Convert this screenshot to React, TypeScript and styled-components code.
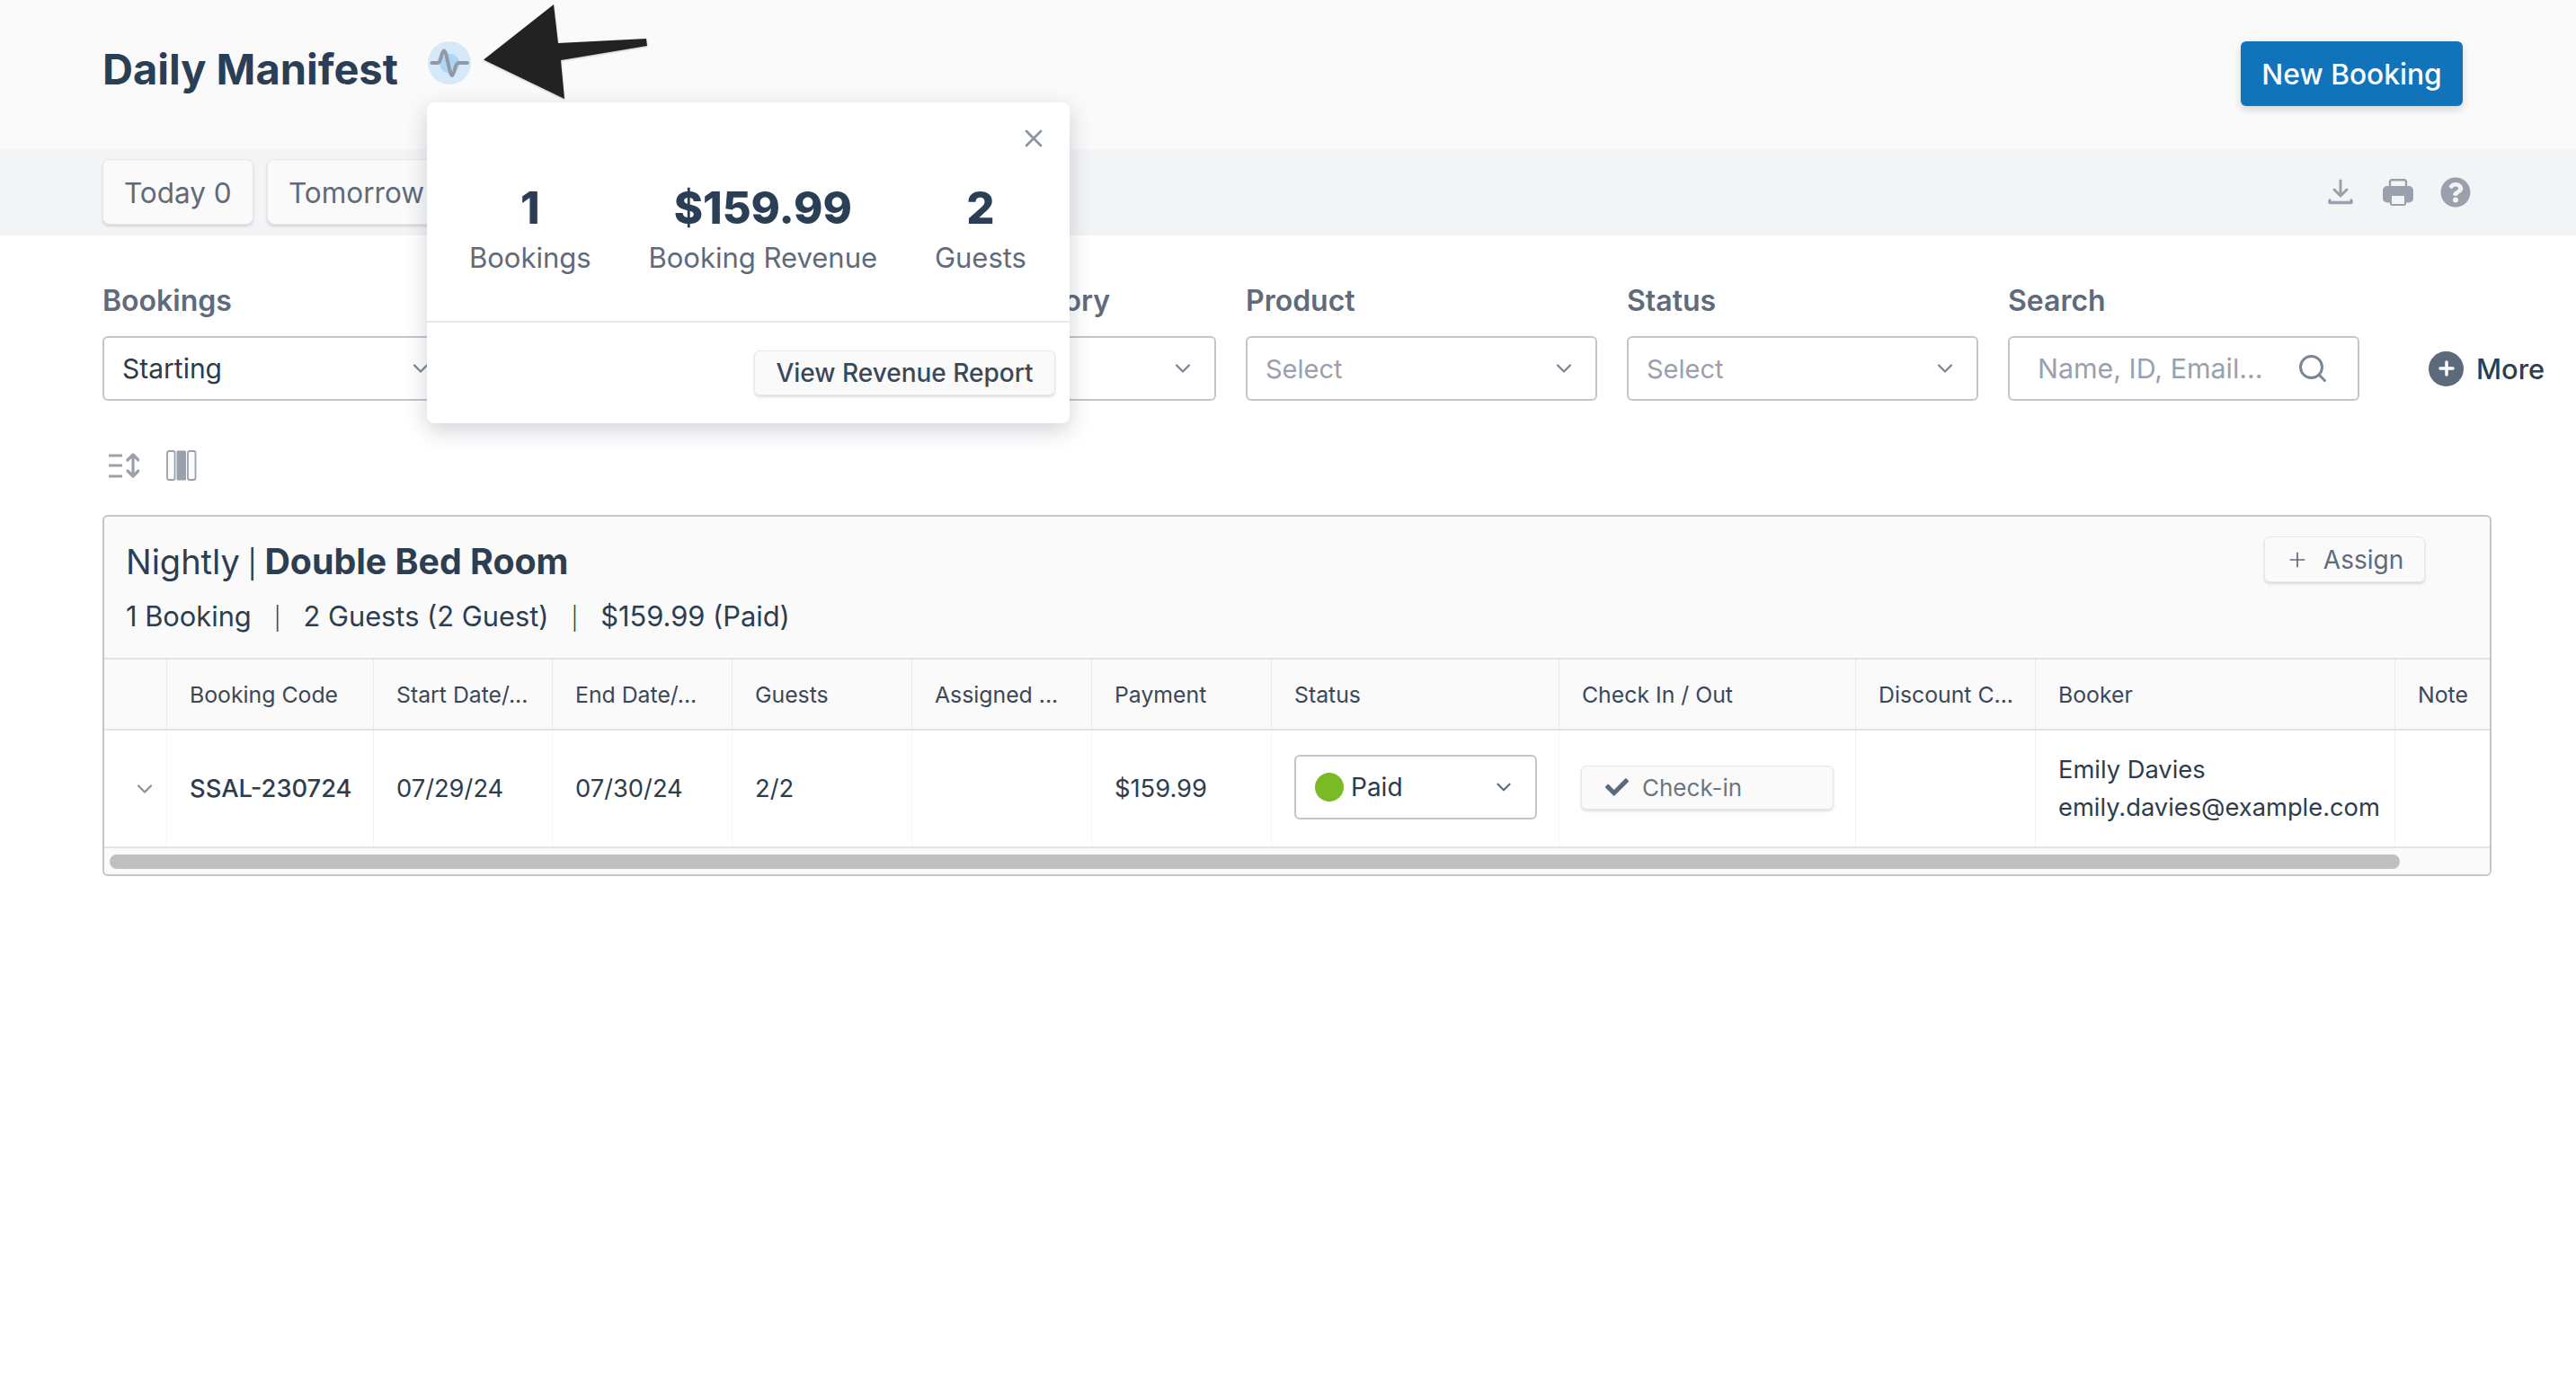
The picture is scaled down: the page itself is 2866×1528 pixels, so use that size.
import React from "react";
import styled, { createGlobalStyle } from "styled-components";
import { ChevronDown, Search, X, Plus } from "lucide-react";
import { FaCheck, FaQuestionCircle } from "react-icons/fa";

const Global = createGlobalStyle`
  html, body { margin: 0; padding: 0; background: #fff; }
  body { font-family: Inter, "Liberation Sans", sans-serif; color: #2c3e50; -webkit-font-smoothing: antialiased; }
  * { box-sizing: border-box; }
`;

const Page = styled.div`
  position: relative;
  width: 2866px;
  height: 1528px;
  overflow: hidden;
`;

const Header = styled.header`
  height: 166px;
  background: #fafafa;
  padding: 46px 126px 0 114px;
  display: flex;
  justify-content: space-between;
  align-items: flex-start;
`;

const TitleRow = styled.div`
  display: flex;
  align-items: center;
  gap: 33px;
`;

const Title = styled.h1`
  margin: 0;
  font-size: 47px;
  line-height: 62px;
  font-weight: 700;
  color: #2a3f55;
`;

const PulseBadge = styled.span`
  width: 48px;
  height: 48px;
  margin-top: -14px;
  display: inline-flex;
`;

const PrimaryButton = styled.button`
  width: 247px;
  height: 72px;
  border: 0;
  border-radius: 6px;
  background: #1174bb;
  color: #fff;
  font: 500 31.7px Inter, sans-serif;
  box-shadow: 0 4px 8px rgba(30, 50, 80, 0.18);
`;

const Toolbar = styled.div`
  height: 96px;
  background: #f3f4f6;
  padding: 11px 117px 0 114px;
  display: flex;
  justify-content: space-between;
`;

const Tabs = styled.div`
  display: flex;
  gap: 15px;
`;

const Tab = styled.button<{ $w: number }>`
  width: ${(p) => p.$w}px;
  height: 73px;
  border: 1px solid #e6e7ea;
  border-radius: 8px;
  background: #fafafa;
  color: #5f6b7a;
  font: 400 31.5px Inter, sans-serif;
  text-align: left;
  padding: 2px 23px 0;
  white-space: nowrap;
  box-shadow: 0 2px 3px rgba(40, 50, 70, 0.16);
`;

const ToolIcons = styled.div`
  display: flex;
  align-items: center;
  gap: 30px;
  height: 73px;
  color: #9aa1ac;
`;

const DownloadSlot = styled.span`
  display: inline-flex;
  margin-right: 3px;
`;

const Filters = styled.div`
  padding: 51px 0 0 114px;
  display: flex;
  gap: 33px;
`;

const Field = styled.div`
  width: 391px;
  flex: none;
`;

const FieldLabel = styled.div`
  height: 44px;
  line-height: 44px;
  font-size: 32px;
  font-weight: 600;
  color: #5f6b7a;
  margin-bottom: 17px;
  white-space: nowrap;
`;

const SelectBox = styled.div<{ $muted?: boolean }>`
  height: 72px;
  border: 2px solid #c4c5c9;
  border-radius: 6px;
  background: #fff;
  display: flex;
  align-items: center;
  justify-content: space-between;
  padding: 0 21px 0 20px;
  font-size: ${(p) => (p.$muted ? 29 : 30)}px;
  color: ${(p) => (p.$muted ? "#9aa1ac" : "#2d3a48")};
  svg { color: #7d8794; flex: none; }
`;

const SearchBox = styled(SelectBox)`
  padding-left: 31px;
  padding-right: 32px;
  font-size: 30.4px;
`;

const MoreLink = styled.div`
  display: flex;
  align-items: center;
  gap: 14px;
  height: 72px;
  margin-top: 61px;
  margin-left: 44px;
  font-size: 30.8px;
  font-weight: 500;
  color: #2c3e50;
`;

const MoreDot = styled.span`
  width: 39px;
  height: 39px;
  border-radius: 50%;
  background: #5c6b7c;
  color: #fff;
  display: inline-flex;
  align-items: center;
  justify-content: center;
`;

const TableTools = styled.div`
  height: 34px;
  margin: 55px 0 38px 121px;
  display: flex;
  align-items: center;
  gap: 30px;
`;

const Card = styled.section`
  margin-left: 114px;
  width: 2658px;
  height: 402px;
  border: 2px solid #c5c6cb;
  border-radius: 6px;
  background: #fafafa;
  overflow: hidden;
`;

const CardHead = styled.div`
  height: 157px;
  padding: 22px 72px 0 24px;
  display: flex;
  justify-content: space-between;
  align-items: flex-start;
`;

const CardTitle = styled.div`
  font-size: 38px;
  line-height: 56px;
  color: #2c3e50;
  b { font-weight: 700; font-size: 39.3px; }
`;

const TitlePipe = styled.span`
  font-size: 31px;
  margin: 0 -2px 0 -2px;
`;

const CardSub = styled.div`
  font-size: 30.8px;
  line-height: 44px;
  margin-top: 8px;
  color: #2c3e50;
  white-space: nowrap;
`;

const Pipe = styled.span`
  font-size: 25px;
  margin: 0 25px;
  font-weight: 300;
`;

const GhostButton = styled.button`
  width: 179px;
  height: 51px;
  border: 1px solid #e6e7ea;
  border-radius: 6px;
  background: #fafafa;
  color: #5f6b7a;
  font: 400 28px Inter, sans-serif;
  display: flex;
  align-items: center;
  justify-content: center;
  gap: 16px;
  box-shadow: 0 2px 3px rgba(40, 50, 70, 0.16);
`;

const GRID = "69px 230px 199px 200px 200px 200px 200px 320px 330px 200px 400px 1fr";

const HeadRow = styled.div`
  display: grid;
  grid-template-columns: ${GRID};
  height: 81px;
  border-top: 2px solid #e3e4e7;
  border-bottom: 2px solid #e3e4e7;
  background: #fafafa;
`;

const HeadCell = styled.div<{ $first?: boolean }>`
  border-left: ${(p) => (p.$first ? "0" : "1px solid #e8e9ec")};
  padding-left: 25px;
  font-size: 24.8px;
  color: #3a4858;
  display: flex;
  align-items: center;
  white-space: nowrap;
  overflow: hidden;
`;

const BodyRow = styled.div`
  display: grid;
  grid-template-columns: ${GRID};
  height: 131px;
  background: #fff;
  border-bottom: 2px solid #e3e4e7;
`;

const BodyCell = styled.div<{ $first?: boolean; $strong?: boolean }>`
  border-left: ${(p) => (p.$first ? "0" : "1px solid #f2f3f5")};
  padding-left: ${(p) => (p.$first ? 20 : 25)}px;
  font-size: 27.3px;
  font-weight: ${(p) => (p.$strong ? 500 : 400)};
  color: #2d3d4e;
  display: flex;
  align-items: center;
  white-space: nowrap;
  justify-content: ${(p) => (p.$first ? "center" : "flex-start")};
`;

const StackCell = styled(BodyCell)`
  flex-direction: column;
  align-items: flex-start;
  justify-content: center;
  line-height: 42px;
`;

const StatusSelect = styled.div`
  width: 270px;
  height: 72px;
  margin-top: -3px;
  border: 2px solid #c4c5c9;
  border-radius: 6px;
  display: flex;
  align-items: center;
  padding: 0 22px 0 21px;
  gap: 8px;
  font-size: 28px;
  color: #2d3a48;
  svg { margin-left: auto; color: #5c6b7c; }
`;

const StatusDot = styled.span`
  width: 32px;
  height: 32px;
  border-radius: 50%;
  background: #7aba25;
`;

const CheckButton = styled.button`
  width: 281px;
  height: 49px;
  margin: -3px 0 0 -1px;
  border: 1px solid #e6e7ea;
  border-radius: 6px;
  background: #fafafa;
  color: #6b7683;
  font: 400 26px Inter, sans-serif;
  display: flex;
  align-items: center;
  gap: 15px;
  padding: 0 26px;
  box-shadow: 0 2px 3px rgba(40, 50, 70, 0.16);
  svg { color: #5c6b7c; }
`;

const ScrollTrack = styled.div`
  height: 27px;
  padding: 7px 6px;
  background: #fafafa;
`;

const ScrollThumb = styled.div`
  width: 2548px;
  height: 16px;
  border-radius: 8px;
  background: #bfbfbf;
`;

const Popover = styled.div`
  position: absolute;
  left: 475px;
  top: 114px;
  width: 715px;
  height: 357px;
  background: #fff;
  border-radius: 8px;
  box-shadow: 0 8px 24px rgba(40, 55, 80, 0.22);
  display: flex;
  flex-direction: column;
`;

const PopClose = styled.button`
  position: absolute;
  top: 24px;
  right: 24px;
  border: 0;
  background: none;
  padding: 0;
  color: #8a93a0;
  display: flex;
`;

const Stats = styled.div`
  height: 245px;
  padding: 91px 48px 0 47px;
  display: flex;
  justify-content: space-between;
  border-bottom: 2px solid #e6e7ea;
`;

const Stat = styled.div`
  text-align: center;
`;

const StatValue = styled.div`
  font-size: 49px;
  line-height: 54px;
  font-weight: 800;
  color: #2a3f55;
`;

const StatLabel = styled.div`
  font-size: 31px;
  line-height: 44px;
  margin-top: 6px;
  color: #5f6b7a;
`;

const PopFoot = styled.div`
  flex: 1;
  display: flex;
  justify-content: flex-end;
  padding: 31px 16px 0 0;
`;

const ReportButton = styled.button`
  width: 335px;
  height: 50px;
  border: 1px solid #e6e7ea;
  border-radius: 6px;
  background: #fafafa;
  color: #3a4858;
  font: 500 28px Inter, sans-serif;
  box-shadow: 0 2px 3px rgba(40, 50, 70, 0.16);
`;

const ArrowMark = styled.svg`
  position: absolute;
  left: 530px;
  top: 0;
  width: 200px;
  height: 120px;
  filter: drop-shadow(0 1px 1px rgba(0, 0, 0, 0.2));
`;

const PulseIcon = () => (
  <svg width="48" height="48" viewBox="0 0 48 48">
    <circle cx="24" cy="24" r="24" fill="#d6e9f9" />
    <circle cx="24.3" cy="24.7" r="11" fill="#aed5f5" />
    <path
      d="M4.5 24H11.5C13 24 14 20 15 16.5C16 12.5 17 10.5 18 10.5C19.5 10.5 20.5 15 22 22C24 31 25.5 38 27 38C28 38 29 35 30 31C31 27 32 24 34 24H44"
      fill="none"
      stroke="#9299a4"
      strokeWidth="4"
      strokeLinecap="round"
      strokeLinejoin="round"
    />
  </svg>
);

const DownloadIcon = () => (
  <svg width="28" height="30" viewBox="0 0 28 30" fill="none" stroke="#9aa1ac" strokeLinecap="round" strokeLinejoin="round">
    <path d="M14 2v17M7 12l7 7 7-7" strokeWidth="3" />
    <path d="M2 24v2.5h24V24" strokeWidth="3.4" />
  </svg>
);

const PrinterIcon = () => (
  <svg width="34" height="30" viewBox="0 0 34 30">
    <rect x="8" y="1.2" width="18" height="12" rx="2.5" fill="#f3f4f6" stroke="#9aa1ac" strokeWidth="2.4" />
    <rect x="0" y="8" width="34" height="18.5" rx="5" fill="#9aa1ac" />
    <rect x="9" y="18" width="16" height="11" rx="1.5" fill="#f3f4f6" stroke="#9aa1ac" strokeWidth="2" />
  </svg>
);

const RowsIcon = () => (
  <svg width="34" height="28" viewBox="0 0 34 28" fill="none" stroke="#9aa1ac" strokeWidth="3.2">
    <path d="M0 3h15M0 14h15M0 26h15" />
    <path d="M27 3v22M21 8l6-6 6 6M21 20l6 6 6-6" strokeLinecap="round" strokeLinejoin="round" />
  </svg>
);

const ColumnsIcon = () => (
  <svg width="34" height="34" viewBox="0 0 34 34">
    <rect x="1" y="1" width="8.5" height="32" rx="2" fill="#fcfcfd" stroke="#9aa1ac" strokeWidth="1.8" />
    <rect x="11.5" y="0.5" width="10.5" height="33" rx="1" fill="#9aa1ac" />
    <rect x="24" y="1" width="8.5" height="32" rx="2" fill="#fcfcfd" stroke="#9aa1ac" strokeWidth="1.8" />
  </svg>
);

const headers = ["", "Booking Code", "Start Date/...", "End Date/...", "Guests", "Assigned ...", "Payment", "Status", "Check In / Out", "Discount C...", "Booker", "Note"];

export default function App() {
  return (
    <Page>
      <Global />
      <Header>
        <TitleRow>
          <Title>Daily Manifest</Title>
          <PulseBadge><PulseIcon /></PulseBadge>
        </TitleRow>
        <PrimaryButton>New Booking</PrimaryButton>
      </Header>
      <Toolbar>
        <Tabs>
          <Tab $w={168}>Today 0</Tab>
          <Tab $w={220}>Tomorrow 0</Tab>
        </Tabs>
        <ToolIcons>
          <DownloadSlot><DownloadIcon /></DownloadSlot>
          <PrinterIcon />
          <FaQuestionCircle size={34} />
        </ToolIcons>
      </Toolbar>
      <Filters>
        <Field>
          <FieldLabel>Bookings</FieldLabel>
          <SelectBox>Starting<ChevronDown size={28} /></SelectBox>
        </Field>
        <Field>
          <FieldLabel>Date</FieldLabel>
          <SelectBox $muted>Select<ChevronDown size={28} /></SelectBox>
        </Field>
        <Field>
          <FieldLabel>Product Category</FieldLabel>
          <SelectBox $muted>Select<ChevronDown size={28} /></SelectBox>
        </Field>
        <Field>
          <FieldLabel>Product</FieldLabel>
          <SelectBox $muted>Select<ChevronDown size={28} /></SelectBox>
        </Field>
        <Field>
          <FieldLabel>Status</FieldLabel>
          <SelectBox $muted>Select<ChevronDown size={28} /></SelectBox>
        </Field>
        <Field>
          <FieldLabel>Search</FieldLabel>
          <SearchBox $muted>Name, ID, Email...<Search size={36} /></SearchBox>
        </Field>
        <MoreLink>
          <MoreDot><Plus size={24} strokeWidth={3.5} /></MoreDot>
          More
        </MoreLink>
      </Filters>
      <TableTools>
        <RowsIcon />
        <ColumnsIcon />
      </TableTools>
      <Card>
        <CardHead>
          <div>
            <CardTitle>Nightly <TitlePipe>|</TitlePipe> <b>Double Bed Room</b></CardTitle>
            <CardSub>
              1 Booking<Pipe>|</Pipe>2 Guests (2 Guest)<Pipe>|</Pipe>$159.99 (Paid)
            </CardSub>
          </div>
          <GhostButton><Plus size={26} strokeWidth={1.6} />Assign</GhostButton>
        </CardHead>
        <HeadRow>
          {headers.map((h, i) => (
            <HeadCell key={i} $first={i === 0}>{h}</HeadCell>
          ))}
        </HeadRow>
        <BodyRow>
          <BodyCell $first><ChevronDown size={28} color="#8a93a0" /></BodyCell>
          <BodyCell $strong>SSAL-230724</BodyCell>
          <BodyCell>07/29/24</BodyCell>
          <BodyCell>07/30/24</BodyCell>
          <BodyCell>2/2</BodyCell>
          <BodyCell />
          <BodyCell>$159.99</BodyCell>
          <BodyCell>
            <StatusSelect><StatusDot />Paid<ChevronDown size={26} /></StatusSelect>
          </BodyCell>
          <BodyCell>
            <CheckButton><FaCheck size={26} />Check-in</CheckButton>
          </BodyCell>
          <BodyCell />
          <StackCell><span>Emily Davies</span><span>emily.davies@example.com</span></StackCell>
          <BodyCell />
        </BodyRow>
        <ScrollTrack><ScrollThumb /></ScrollTrack>
      </Card>
      <Popover>
        <PopClose><X size={32} strokeWidth={2} /></PopClose>
        <Stats>
          <Stat><StatValue>1</StatValue><StatLabel>Bookings</StatLabel></Stat>
          <Stat><StatValue>$159.99</StatValue><StatLabel>Booking Revenue</StatLabel></Stat>
          <Stat><StatValue>2</StatValue><StatLabel>Guests</StatLabel></Stat>
        </Stats>
        <PopFoot><ReportButton>View Revenue Report</ReportButton></PopFoot>
      </Popover>
      <ArrowMark viewBox="530 0 200 120">
        <polygon points="538,66.5 616,5 621,48 719,43 720,51 624,67 628,110" fill="#222" />
      </ArrowMark>
    </Page>
  );
}
